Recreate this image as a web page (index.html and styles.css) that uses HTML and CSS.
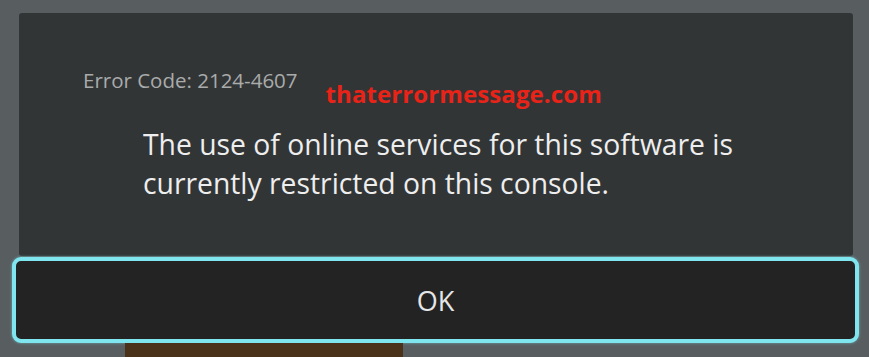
FILE: index.html
```html
<!DOCTYPE html>
<html>
<head>
<meta charset="utf-8">
<link rel="stylesheet" href="styles.css">
</head>
<body>
<div class="screen">
  <div class="panel">
    <div class="head">
      <span class="code">Error Code: 2124-4607</span>
      <span class="mark">thaterrormessage.com</span>
    </div>
    <p class="msg">The use of online services for this software is<br>currently restricted on this console.</p>
  </div>
  <button class="ok">OK</button>
  <div class="under"></div>
</div>
</body>
</html>
```

FILE: styles.css
```css
html, body {
  margin: 0;
  padding: 0;
}
body {
  width: 869px;
  height: 357px;
  overflow: hidden;
  background: #585d60;
  font-family: "Open Sans", "DejaVu Sans", sans-serif;
}
.screen {
  display: flex;
  flex-direction: column;
  padding-top: 13px;
}
.panel {
  margin-left: 19px;
  width: 834px;
  height: 243px;
  background: #323536;
  border-radius: 3px;
  box-sizing: border-box;
  padding: 55px 0 0 64px;
}
.head {
  display: flex;
  align-items: flex-start;
}
.code {
  color: #a9abab;
  font-size: 20.5px;
  line-height: 24px;
}
.mark {
  color: #ea2318;
  font-weight: 700;
  font-size: 24px;
  line-height: 28px;
  margin-left: 28px;
  margin-top: 12px;
  letter-spacing: 0.1px;
}
.msg {
  margin: 17px 0 0 60px;
  color: #eeeeee;
  font-size: 28.3px;
  line-height: 39px;
}
.ok {
  margin: 1px 0 0 12px;
  width: 847px;
  height: 86px;
  box-sizing: border-box;
  background: #232323;
  border: 4px solid #7fe5ee;
  border-radius: 9px;
  box-shadow: 0 0 3px rgba(127, 229, 238, 0.6);
  color: #e6e6e6;
  font-family: "Open Sans", "DejaVu Sans", sans-serif;
  font-size: 27px;
  padding: 0;
}
.under {
  margin: 0 0 0 125px;
  width: 278px;
  height: 20px;
  background: #4a3119;
}
```
